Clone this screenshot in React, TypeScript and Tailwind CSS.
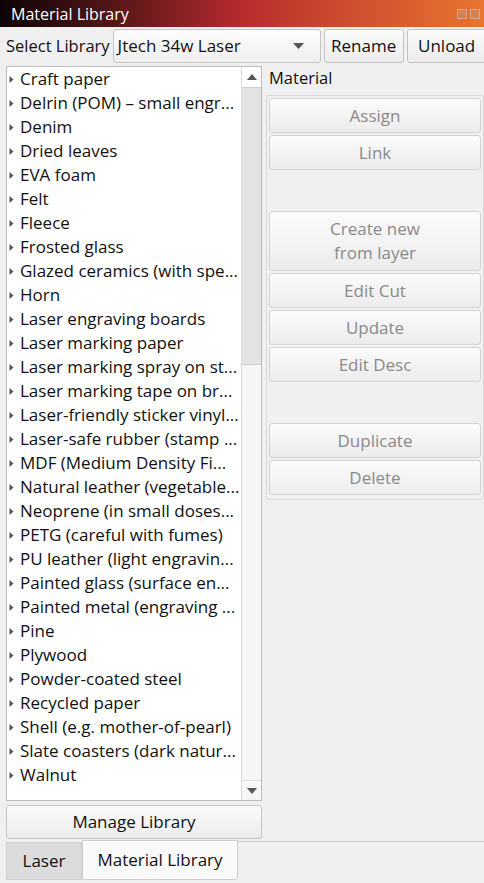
import React from 'react';

const materials = [
  'Craft paper',
  'Delrin (POM) – small engr...',
  'Denim',
  'Dried leaves',
  'EVA foam',
  'Felt',
  'Fleece',
  'Frosted glass',
  'Glazed ceramics (with spe...',
  'Horn',
  'Laser engraving boards',
  'Laser marking paper',
  'Laser marking spray on st...',
  'Laser marking tape on br...',
  'Laser-friendly sticker vinyl...',
  'Laser-safe rubber (stamp ...',
  'MDF (Medium Density Fi...',
  'Natural leather (vegetable...',
  'Neoprene (in small doses...',
  'PETG (careful with fumes)',
  'PU leather (light engravin...',
  'Painted glass (surface en...',
  'Painted metal (engraving ...',
  'Pine',
  'Plywood',
  'Powder-coated steel',
  'Recycled paper',
  'Shell (e.g. mother-of-pearl)',
  'Slate coasters (dark natur...',
  'Walnut',
];

const Arrow = () => (
  <svg width="5" height="9" viewBox="0 0 5 9" className="shrink-0">
    <path d="M0.5 1 L4.5 4.5 L0.5 8 Z" fill="#555" />
  </svg>
);

const Btn = ({ children, className = '', disabled = false }: { children: React.ReactNode; className?: string; disabled?: boolean }) => (
  <div
    className={`flex items-center justify-center rounded-[3px] border bg-gradient-to-b from-[#fbfbfb] to-[#ececec] text-center leading-6 whitespace-nowrap ${
      disabled ? 'text-[#8a8a8a] border-[#d4d4d4]' : 'text-[#111] border-[#c4c4c4]'
    } ${className}`}
  >
    {children}
  </div>
);

export default function App() {
  return (
    <div
      className="w-[484px] h-[883px] bg-[#f0f0f0] overflow-hidden flex flex-col text-[17px]"
      style={{ fontFamily: '"Open Sans", "Noto Sans", sans-serif' }}
    >
      {/* Title bar */}
      <div className="h-[27px] shrink-0 flex items-center justify-between pl-[11px] pr-[4px] bg-gradient-to-r from-[#0e0406] via-[#b92b2e] to-[#e7742f] text-white">
        <span className="text-[16px] leading-none">Material Library</span>
        <div className="flex gap-[3px] opacity-60">
          <div className="w-[10px] h-[10px] border border-[#ccc] bg-[#d98a5a]" />
          <div className="w-[10px] h-[10px] border border-[#ccc] bg-[#d98a5a]" />
        </div>
      </div>

      {/* Library selection row */}
      <div className="flex items-center shrink-0 mt-[2px] h-[34px] pl-[6px] gap-[3px] whitespace-nowrap">
        <span className="text-[#111] text-[16.5px] shrink-0">Select Library</span>
        <div className="w-[208px] shrink-0 h-[34px] flex items-center justify-between pl-[4px] pr-[16px] rounded-[3px] border border-[#c4c4c4] bg-gradient-to-b from-[#fdfdfd] to-[#efefef] text-[#111]">
          <span>Jtech 34w Laser</span>
          <svg width="11" height="6" viewBox="0 0 11 6">
            <path d="M0 0 L11 0 L5.5 6 Z" fill="#555" />
          </svg>
        </div>
        <Btn className="w-[80px] shrink-0 h-[34px]">Rename</Btn>
        <Btn className="w-[80px] shrink-0 h-[34px]">Unload</Btn>
      </div>

      {/* Main area */}
      <div className="flex shrink-0 mt-[3px] pl-[6px]">
        {/* Left column */}
        <div className="w-[256px] flex flex-col">
          <div className="h-[735px] flex border border-[#bcbcbc] bg-white">
            <div className="flex-1 flex flex-col overflow-hidden">
              {materials.map((m) => (
                <div key={m} className="h-[24px] shrink-0 flex items-center gap-[6px] pl-[2px] text-[#111] whitespace-nowrap">
                  <Arrow />
                  <span>{m}</span>
                </div>
              ))}
            </div>
            <div className="w-[20px] flex flex-col border-l border-[#dcdcdc] bg-[#f6f6f6]">
              <div className="h-[20px] flex items-center justify-center bg-white">
                <svg width="10" height="6" viewBox="0 0 10 6">
                  <path d="M0 6 L10 6 L5 0 Z" fill="#555" />
                </svg>
              </div>
              <div className="h-[278px] bg-[#e3e3e3] border-y border-[#cfcfcf]" />
              <div className="flex-1" />
              <div className="h-[20px] flex items-center justify-center border-t border-[#dcdcdc]">
                <svg width="10" height="6" viewBox="0 0 10 6">
                  <path d="M0 0 L10 0 L5 6 Z" fill="#555" />
                </svg>
              </div>
            </div>
          </div>
          <Btn className="h-[34px] mt-[4px]">Manage Library</Btn>
        </div>

        {/* Right column */}
        <div className="flex-1 flex flex-col pl-[5px]">
          <div className="h-[24px] flex items-center text-[#111] pl-[2px] text-[16.5px]">Material</div>
          <div className="ml-[-1px] mt-[5px] h-[405px] border border-[#dadada] rounded-[3px] px-[2px] pt-[2px] flex flex-col gap-[2px]">
            <Btn disabled className="h-[35px]">Assign</Btn>
            <Btn disabled className="h-[35px]">Link</Btn>
            <div className="h-[37px]" />
            <Btn disabled className="h-[60px] flex-col">
              <span>Create new</span>
              <span>from layer</span>
            </Btn>
            <Btn disabled className="h-[35px]">Edit Cut</Btn>
            <Btn disabled className="h-[35px]">Update</Btn>
            <Btn disabled className="h-[35px]">Edit Desc</Btn>
            <div className="h-[37px]" />
            <Btn disabled className="h-[35px]">Duplicate</Btn>
            <Btn disabled className="h-[35px]">Delete</Btn>
          </div>
        </div>
      </div>

      {/* Tabs */}
      <div className="flex shrink-0 pl-[6px]">
        <div className="w-[76px] h-[38px] mt-[3px] flex items-center justify-center bg-[#dcdcdc] border border-[#cfcfcf] text-[#111]">
          Laser
        </div>
        <div className="w-[156px] h-[40px] mt-[1px] flex items-center justify-center bg-[#fafafa] border border-[#cfcfcf] rounded-b-[3px] text-[#111]">
          Material Library
        </div>
        <div className="flex-1 mt-[2px] border-t border-[#cfcfcf]" />
      </div>
    </div>
  );
}
